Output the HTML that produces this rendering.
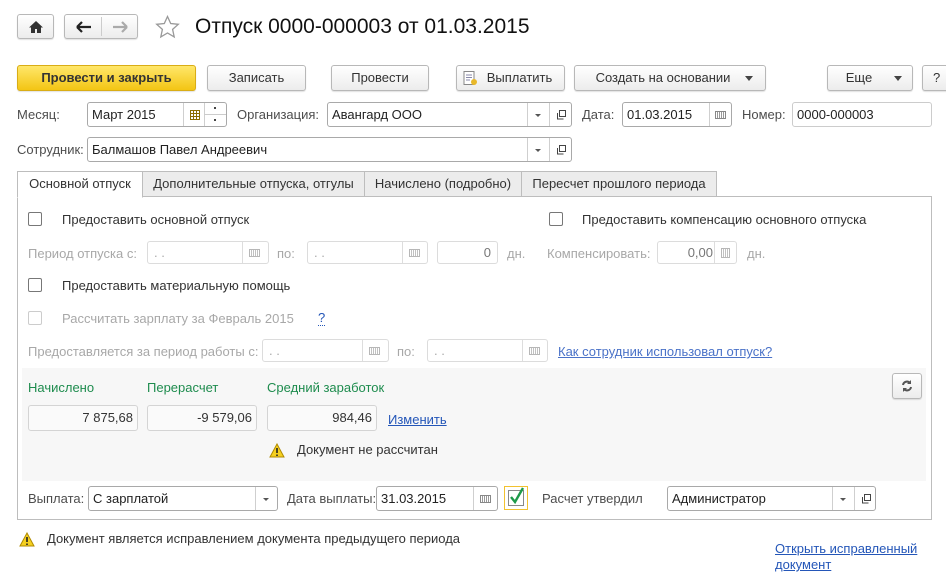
<!DOCTYPE html>
<html><head><meta charset="utf-8"><style>
*{box-sizing:border-box;margin:0;padding:0}
body{width:946px;height:582px;background:#fff;font-family:"Liberation Sans",Arial,sans-serif;font-size:13px;color:#333;position:relative;overflow:hidden}
.a{position:absolute;white-space:nowrap}
.btn{position:absolute;border:1px solid #b8b8b8;border-radius:3px;background:linear-gradient(#fff,#ececec);text-align:center;color:#333;font-size:13px;box-shadow:0 1px 1px rgba(0,0,0,.12)}
.f{position:absolute;border:1px solid #a9a9a9;border-radius:3px;background:#fff;height:25px;padding:3px 4px;color:#222;font-size:13px;line-height:17px}
.fd{position:absolute;border:1px solid #dcdcdc;border-radius:3px;background:#fff;height:23px;color:#aaa;font-size:13px;line-height:21px;padding:0 6px}
.sep{position:absolute;top:0;bottom:0;border-left:1px solid #cfcfcf}
.lbl{color:#4d4d4d}
.dis{color:#a8a8a8}
.cb{position:absolute;width:14px;height:14px;border:1px solid #777;border-radius:2px;background:#fff}
.g{color:#1e8c4e}
.lnk{color:#2456b8;text-decoration:underline}
.cal{position:absolute;width:11px;height:8px;border:1px solid #888;background:repeating-linear-gradient(90deg,#fff 0 1px,#999 1px 2px)}
.tab{position:absolute;top:171px;height:26px;border:1px solid #bdbdbd;background:#ececec;line-height:24px;text-align:center;color:#333}
.ro{position:absolute;height:26px;border:1px solid #d4d4d4;border-radius:3px;background:#fafafa;text-align:right;padding:4px 4px;color:#333}
</style></head><body>
<!-- top nav -->
<div class="btn" style="left:17px;top:14px;width:37px;height:25px"><svg width="16" height="14" style="margin-top:5px" viewBox="0 0 16 14"><path d="M8 1L1 7.5h2V13h4V9h2v4h4V7.5h2z" fill="#333"/></svg></div>
<div class="btn" style="left:64px;top:14px;width:74px;height:25px"><div style="position:absolute;left:36px;top:2px;bottom:2px;border-left:1px solid #ccc"></div>
<svg width="16" height="12" style="position:absolute;left:11px;top:6px"><path d="M1 6h14M1 6l5-5M1 6l5 5" stroke="#222" stroke-width="2.2" fill="none"/></svg>
<svg width="16" height="12" style="position:absolute;left:47px;top:6px"><path d="M1 6h14M15 6l-5-5M15 6l-5 5" stroke="#aaa" stroke-width="2.2" fill="none"/></svg></div>
<svg class="a" style="left:155px;top:15px" width="25" height="24" viewBox="0 0 25 24"><path d="M12.5 1.5l3.2 7 7.6.8-5.7 5.1 1.6 7.5-6.7-3.9-6.7 3.9 1.6-7.5L1.7 9.3l7.6-.8z" fill="none" stroke="#999" stroke-width="1.3"/></svg>
<div class="a" style="left:195px;top:15px;font-size:21px;color:#111">Отпуск 0000-000003 от 01.03.2015</div>
<!-- toolbar -->
<div class="btn" style="left:17px;top:65px;width:179px;height:26px;line-height:24px;background:linear-gradient(#ffe76a,#f3c514);border-color:#d9ad16;font-weight:bold;color:#333">Провести и закрыть</div>
<div class="btn" style="left:207px;top:65px;width:99px;height:26px;line-height:24px">Записать</div>
<div class="btn" style="left:331px;top:65px;width:98px;height:26px;line-height:24px">Провести</div>
<div class="btn" style="left:456px;top:65px;width:109px;height:26px;line-height:24px;padding-left:18px"><svg width="14" height="15" style="position:absolute;left:6px;top:5px"><rect x="1" y="0.5" width="10" height="13" fill="#fff" stroke="#888"/><path d="M3 4h6M3 6.5h6M3 9h4" stroke="#88a"/><circle cx="11" cy="11" r="3" fill="#e8b82a"/></svg>Выплатить</div>
<div class="btn" style="left:574px;top:65px;width:192px;height:26px;line-height:24px;padding-right:14px">Создать на основании<span style="position:absolute;right:12px;top:10px;border:4px solid transparent;border-top:5px solid #444"></span></div>
<div class="btn" style="left:827px;top:65px;width:86px;height:26px;line-height:24px;padding-right:22px">Еще<span style="position:absolute;right:10px;top:10px;border:4px solid transparent;border-top:5px solid #444"></span></div>
<div class="btn" style="left:922px;top:65px;width:30px;height:26px;line-height:24px;text-align:left;padding-left:10px">?</div>
<!-- row month -->
<div class="a lbl" style="left:17px;top:107px">Месяц:</div>
<div class="f" style="left:87px;top:102px;width:140px">Март 2015<div class="sep" style="left:95px"></div><div class="sep" style="left:116px"></div>
<svg width="10" height="10" style="position:absolute;left:102px;top:7px"><rect x="0.5" y="0.5" width="9" height="9" fill="none" stroke="#8a6d00"/><path d="M0 3.5h10M0 6.5h10M3.5 0v10M6.5 0v10" stroke="#8a6d00"/></svg>
<div style="position:absolute;left:116px;top:11px;width:22px;border-top:1px solid #ccc"></div>
<div style="position:absolute;left:126px;top:4px;width:2px;height:2px;background:#444"></div><div style="position:absolute;left:126px;top:16px;width:2px;height:2px;background:#444"></div></div>
<div class="a lbl" style="left:237px;top:107px">Организация:</div>
<div class="f" style="left:327px;top:102px;width:245px">Авангард ООО<div class="sep" style="left:199px"></div><div class="sep" style="left:221px"></div>
<span style="position:absolute;left:207px;top:11px;border:3px solid transparent;border-top:3px solid #555"></span>
<svg width="10" height="10" style="position:absolute;left:228px;top:7px"><rect x="3.5" y="0.5" width="6" height="6" fill="none" stroke="#444"/><path d="M1.5 3v6h6" fill="none" stroke="#444"/></svg></div>
<div class="a lbl" style="left:582px;top:107px">Дата:</div>
<div class="f" style="left:622px;top:102px;width:110px">01.03.2015<div class="sep" style="left:86px"></div><div class="cal" style="left:92px;top:8px"></div></div>
<div class="a lbl" style="left:742px;top:107px">Номер:</div>
<div class="f" style="left:792px;top:102px;width:140px;border-color:#ccc">0000-000003</div>
<!-- employee -->
<div class="a lbl" style="left:17px;top:142px">Сотрудник:</div>
<div class="f" style="left:87px;top:137px;width:485px">Балмашов Павел Андреевич<div class="sep" style="left:439px"></div><div class="sep" style="left:461px"></div>
<span style="position:absolute;left:447px;top:11px;border:3px solid transparent;border-top:3px solid #555"></span>
<svg width="10" height="10" style="position:absolute;left:468px;top:7px"><rect x="3.5" y="0.5" width="6" height="6" fill="none" stroke="#444"/><path d="M1.5 3v6h6" fill="none" stroke="#444"/></svg></div>
<!-- panel -->
<div class="a" style="left:17px;top:196px;width:915px;height:324px;border:1px solid #bdbdbd"></div>
<div class="tab" style="left:142px;width:223px">Дополнительные отпуска, отгулы</div>
<div class="tab" style="left:364px;width:158px">Начислено (подробно)</div>
<div class="tab" style="left:521px;width:196px">Пересчет прошлого периода</div>
<div class="tab" style="left:17px;width:126px;background:#fff;border-bottom-color:#fff;height:27px">Основной отпуск</div>
<!-- content -->
<div class="cb" style="left:28px;top:212px"></div><div class="a" style="left:62px;top:212px">Предоставить основной отпуск</div>
<div class="cb" style="left:549px;top:212px"></div><div class="a" style="left:582px;top:212px">Предоставить компенсацию основного отпуска</div>
<div class="a dis" style="left:28px;top:246px">Период отпуска с:</div>
<div class="fd" style="left:147px;top:241px;width:122px">. .<div class="sep" style="left:94px;border-color:#ddd"></div><div class="cal" style="left:101px;top:7px;opacity:.6"></div></div>
<div class="a dis" style="left:277px;top:246px">по:</div>
<div class="fd" style="left:307px;top:241px;width:121px">. .<div class="sep" style="left:94px;border-color:#ddd"></div><div class="cal" style="left:101px;top:7px;opacity:.6"></div></div>
<div class="fd" style="left:437px;top:241px;width:61px;text-align:right;color:#777">0</div>
<div class="a dis" style="left:507px;top:246px">дн.</div>
<div class="a dis" style="left:547px;top:246px">Компенсировать:</div>
<div class="fd" style="left:657px;top:241px;width:80px;color:#777;padding:0">
<span style="position:absolute;right:23px">0,00</span><div class="sep" style="left:56px;border-color:#ddd"></div><div class="cal" style="left:63px;top:6px;width:9px;height:10px;opacity:.6"></div></div>
<div class="a dis" style="left:747px;top:246px">дн.</div>
<div class="cb" style="left:28px;top:278px"></div><div class="a" style="left:62px;top:278px">Предоставить материальную помощь</div>
<div class="cb" style="left:28px;top:311px;border-color:#ccc"></div><div class="a dis" style="left:62px;top:311px">Рассчитать зарплату за Февраль 2015</div>
<div class="a" style="left:318px;top:311px;color:#2456b8;border-bottom:1px dotted #2456b8;line-height:14px">?</div>
<div class="a dis" style="left:28px;top:344px">Предоставляется за период работы с:</div>
<div class="fd" style="left:262px;top:339px;width:127px">. .<div class="sep" style="left:99px;border-color:#ddd"></div><div class="cal" style="left:106px;top:7px;opacity:.6"></div></div>
<div class="a dis" style="left:397px;top:344px">по:</div>
<div class="fd" style="left:427px;top:339px;width:121px">. .<div class="sep" style="left:94px;border-color:#ddd"></div><div class="cal" style="left:101px;top:7px;opacity:.6"></div></div>
<div class="a lnk" style="left:558px;top:344px;color:#4a72c8">Как сотрудник использовал отпуск?</div>
<!-- gray area -->
<div class="a" style="left:22px;top:368px;width:904px;height:113px;background:#f7f7f7"></div>
<div class="btn" style="left:892px;top:373px;width:30px;height:26px"><svg width="12" height="12" style="margin-top:6px" viewBox="0 0 12 12"><path d="M2 5a4 4 0 0 1 7-2M10 7a4 4 0 0 1-7 2" fill="none" stroke="#555" stroke-width="2"/><path d="M10 0v4H6zM2 12V8h4z" fill="#555"/></svg></div>
<div class="a g" style="left:28px;top:380px">Начислено</div>
<div class="a g" style="left:147px;top:380px">Перерасчет</div>
<div class="a g" style="left:267px;top:380px">Средний заработок</div>
<div class="ro" style="left:28px;top:405px;width:110px">7 875,68</div>
<div class="ro" style="left:147px;top:405px;width:110px">-9 579,06</div>
<div class="ro" style="left:267px;top:405px;width:110px">984,46</div>
<div class="a lnk" style="left:388px;top:412px">Изменить</div>
<svg class="a" style="left:269px;top:443px" width="16" height="15" viewBox="0 0 16 15"><path d="M8 1L15 14H1z" fill="#f5d020" stroke="#b08a00"/><path d="M8 5v5M8 11.5v1.5" stroke="#222" stroke-width="1.6"/></svg>
<div class="a" style="left:297px;top:442px">Документ не рассчитан</div>
<!-- bottom row -->
<div class="a lbl" style="left:28px;top:491px">Выплата:</div>
<div class="f" style="left:88px;top:486px;width:190px">С зарплатой<div class="sep" style="left:166px"></div><span style="position:absolute;left:174px;top:11px;border:3px solid transparent;border-top:3px solid #555"></span></div>
<div class="a lbl" style="left:287px;top:491px">Дата выплаты:</div>
<div class="f" style="left:376px;top:486px;width:122px">31.03.2015<div class="sep" style="left:96px"></div><div class="cal" style="left:103px;top:8px"></div></div>
<div class="a" style="left:504px;top:486px;width:24px;height:24px;border:1px solid #f2c230"></div>
<div class="a" style="left:508px;top:490px;width:16px;height:16px;border:1px solid #888;background:#fff"></div>
<svg class="a" style="left:508px;top:486px" width="18" height="20"><path d="M3 11l4 5L15 2" fill="none" stroke="#1e9a4a" stroke-width="2.4"/></svg>
<div class="a lbl" style="left:542px;top:491px">Расчет утвердил</div>
<div class="f" style="left:667px;top:486px;width:209px">Администратор<div class="sep" style="left:164px"></div><div class="sep" style="left:186px"></div>
<span style="position:absolute;left:172px;top:11px;border:3px solid transparent;border-top:3px solid #555"></span>
<svg width="10" height="10" style="position:absolute;left:193px;top:7px"><rect x="3.5" y="0.5" width="6" height="6" fill="none" stroke="#444"/><path d="M1.5 3v6h6" fill="none" stroke="#444"/></svg></div>
<!-- footer -->
<svg class="a" style="left:19px;top:532px" width="16" height="15" viewBox="0 0 16 15"><path d="M8 1L15 14H1z" fill="#f5d020" stroke="#b08a00"/><path d="M8 5v5M8 11.5v1.5" stroke="#222" stroke-width="1.6"/></svg>
<div class="a" style="left:47px;top:531px">Документ является исправлением документа предыдущего периода</div>
<div class="a lnk" style="left:775px;top:541px;line-height:16px">Открыть исправленный<br>документ</div>
</body></html>
